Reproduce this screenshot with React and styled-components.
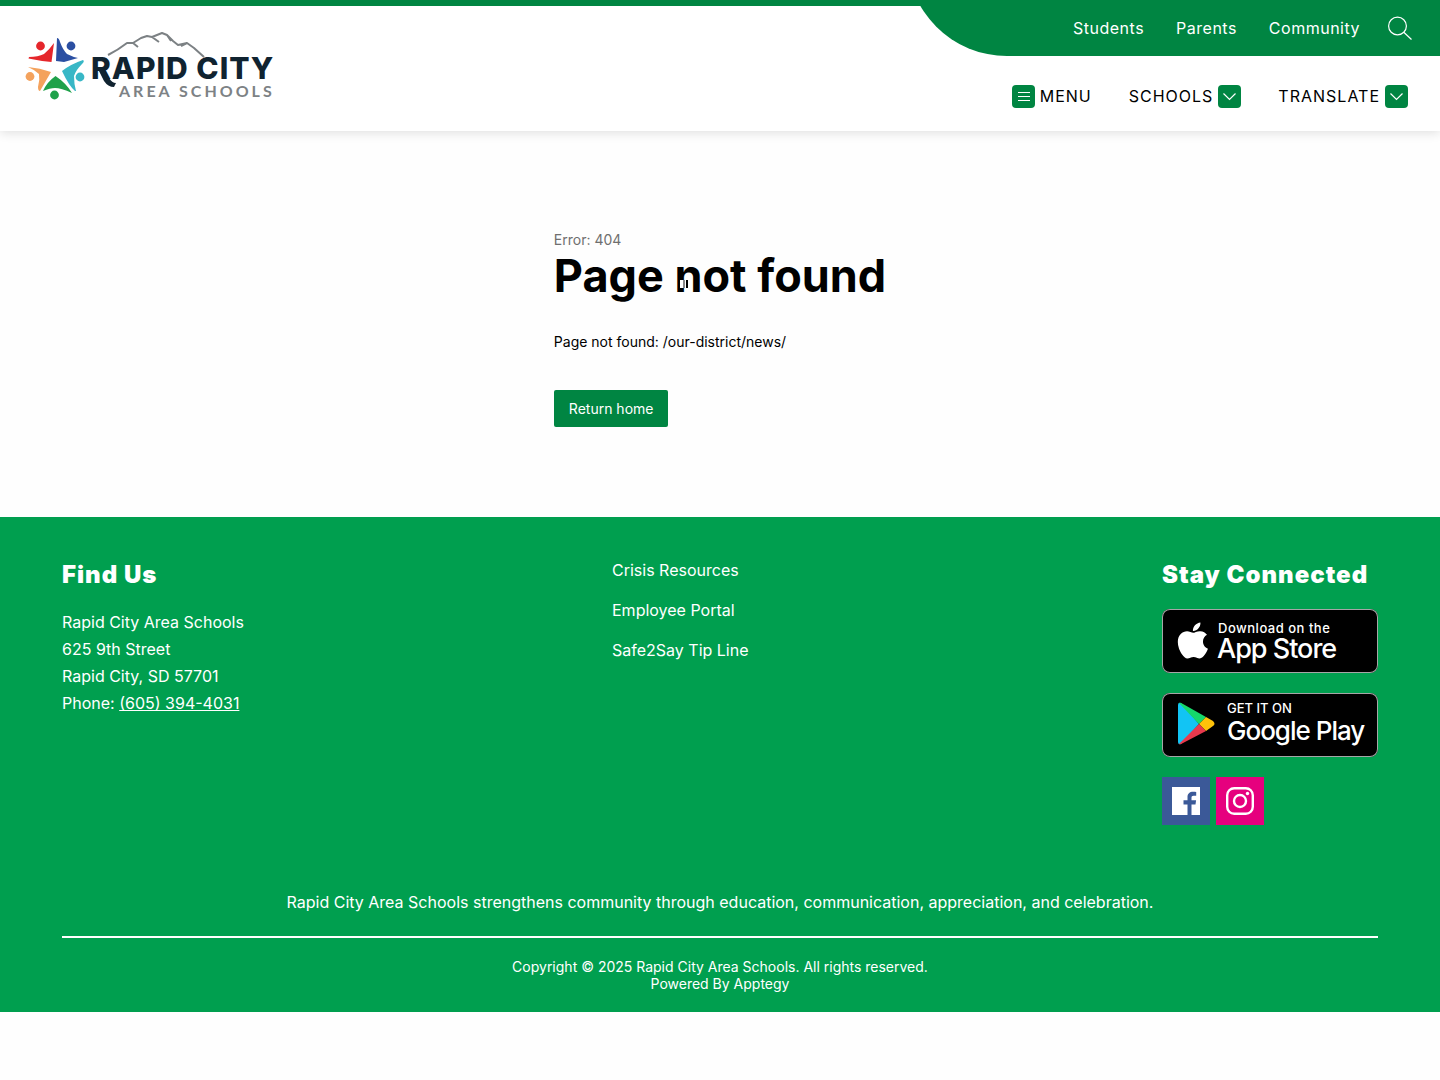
import React from "react";
import styled, { createGlobalStyle } from "styled-components";

const utilityLinks = ["Students", "Parents", "Community"];
const footerLinks = ["Crisis Resources", "Employee Portal", "Safe2Say Tip Line"];

const App = () => {
  return (
    <>
      <GlobalStyle />
      <Header />
      <NotFound />
      <Footer />
    </>
  );
};

const Header = () => {
  return (
    <HeaderWrapper>
      <LogoLink href="#home" aria-label="Rapid City Area Schools">
        <Logo />
      </LogoLink>
      <HeaderRight>
        <UtilityBar>
          {utilityLinks.map((link) => (
            <a href="#utility" key={link}>
              {link}
            </a>
          ))}
          <button type="button" aria-label="Search">
            <svg width="24" height="24" viewBox="0 0 24 24" fill="none">
              <circle cx="9.5" cy="10" r="8.9" stroke="currentColor" strokeWidth="1.2" />
              <path d="M15.8 16.300 23.500 23.500" stroke="currentColor" strokeWidth="1.2" />
            </svg>
          </button>
        </UtilityBar>
        <MainNav>
          <NavButton type="button">
            <NavIcon>
              <svg width="23" height="23" viewBox="0 0 23 23">
                <path d="M6 7.5h12M6 11.5h12M6 15.5h12" stroke="#fff" />
              </svg>
            </NavIcon>
            MENU
          </NavButton>
          <NavButton type="button">
            SCHOOLS
            <Chevron />
          </NavButton>
          <NavButton type="button">
            TRANSLATE
            <Chevron />
          </NavButton>
        </MainNav>
      </HeaderRight>
    </HeaderWrapper>
  );
};

const Chevron = () => (
  <NavIcon>
    <svg width="23" height="23" viewBox="0 0 23 23" fill="none">
      <path d="M5.500 8.500l6 6 6-6" stroke="#fff" strokeWidth="1.2" />
    </svg>
  </NavIcon>
);

const Logo = () => (
  <svg width="250" height="76" viewBox="0 0 250 76">
    <g>
      <circle cx="16.5" cy="16" r="4.4" fill="#e5262b" />
      <path d="M30 13 27.5 32Q16 31 4.5 28.5L5 27Q14 27 20 24Q25 20 30 13Z" fill="#e5262b" />
      <circle cx="47" cy="16" r="4.4" fill="#2b4fa2" />
      <path d="M33 8Q35 8 36 12Q39 20 43 24Q49 27 54 28L40 32 32 31Z" fill="#2b4fa2" />
      <circle cx="56" cy="47" r="4.4" fill="#38b7c6" />
      <path d="M59 30Q61 31 58 34Q52 40 50 46Q50 54 52 61L51 61Q45 56 38 41 47 34 59 30Z" fill="#38b7c6" />
      <circle cx="6" cy="46.5" r="4.4" fill="#f4a25d" />
      <path d="M4 37Q16 38 27 42L16 61Q14 61 14 57Q16 50 15 44Q11 40 4 37Z" fill="#f4a25d" />
      <circle cx="30.5" cy="65" r="4.4" fill="#1fa14a" />
      <path d="M31.5 46Q42 53 48 63Q37 58 31 58Q26 58 19 61Q23 52 31.5 46Z" fill="#1fa14a" />
    </g>
    <path
      d="M84 25Q94 20 103 13L109 13 117 8 123 6 128 7 138 3 143 5 149 11 154 15 163 13 170 18 180 27M109 13l5 4M128 7l7 5M143 5l4 6M163 13l-6 3"
      fill="none"
      stroke="#7c8184"
      strokeWidth="2"
      strokeLinejoin="round"
    />
    <LogoName x="67" y="49">
      RAPID CITY
    </LogoName>
    <path d="M74 39 80 39 85 48Q88 53 92 53L90 57Q84 57 80 51Z" fill="#102330" />
    <LogoSub x="95" y="67">
      AREA SCHOOLS
    </LogoSub>
  </svg>
);

const NotFound = () => {
  return (
    <Main>
      <div>
        <ErrorCode>Error: 404</ErrorCode>
        <Title>Page not found</Title>
        <Message>Page not found: /our-district/news/</Message>
        <HomeLink href="#home">Return home</HomeLink>
      </div>
    </Main>
  );
};

const Footer = () => {
  return (
    <FooterWrapper>
      <Columns>
        <section>
          <FooterTitle>Find Us</FooterTitle>
          <Address>
            Rapid City Area Schools
            <br />
            625 9th Street
            <br />
            Rapid City, SD 57701
            <br />
            Phone: <a href="tel:6053944031">(605) 394-4031</a>
          </Address>
        </section>
        <LinkList>
          {footerLinks.map((link) => (
            <li key={link}>
              <a href="#footer">{link}</a>
            </li>
          ))}
        </LinkList>
        <section>
          <FooterTitle>Stay Connected</FooterTitle>
          <StoreLinks>
            <StoreLink href="#app-store" aria-label="Download on the App Store">
              <AppleBadge />
            </StoreLink>
            <StoreLink href="#google-play" aria-label="Get it on Google Play">
              <PlayBadge />
            </StoreLink>
          </StoreLinks>
          <SocialLinks>
            <SocialLink href="#facebook" aria-label="Facebook" $color="#3b5998">
              <svg width="28" height="28" viewBox="0 0 28 28">
                <path
                  d="M0 0h28v28h-8.5V17.5h4l.6-4.2h-4.6v-2.500c0-1.300.5-2 2.100-2h2.600V5c-.8-.1-1.900-.2-3-.2-3.600 0-5.700 2-5.700 5.400v3.100h-4v4.200h4V28H0z"
                  fill="#fff"
                />
              </svg>
            </SocialLink>
            <SocialLink href="#instagram" aria-label="Instagram" $color="#e6007e">
              <svg width="28" height="28" viewBox="0 0 28 28" fill="none">
                <rect x="1.2" y="1.2" width="25.6" height="25.6" rx="7" stroke="#fff" strokeWidth="2.4" />
                <circle cx="14" cy="14" r="6" stroke="#fff" strokeWidth="2.4" />
                <circle cx="21.5" cy="6.5" r="1.7" fill="#fff" />
              </svg>
            </SocialLink>
          </SocialLinks>
        </section>
      </Columns>
      <Mission>
        Rapid City Area Schools strengthens community through education,
        communication, appreciation, and celebration.
      </Mission>
      <Copyright>
        Copyright © 2025 Rapid City Area Schools. All rights reserved.
        <br />
        Powered By <a href="#apptegy">Apptegy</a>
      </Copyright>
    </FooterWrapper>
  );
};

const AppleBadge = () => (
  <svg width="216" height="64" viewBox="0 0 216 64">
    <g transform="translate(15.500 11) scale(0.08)" fill="#fff">
      <path d="M318.700 268.700c-.2-36.700 16.400-64.400 50-84.800-18.800-26.900-47.200-41.700-84.700-44.600-35.500-2.800-74.300 20.700-88.500 20.700-15 0-49.400-19.700-76.400-19.700C63.300 141.200 4 184.800 4 273.500q0 39.300 14.400 81.200c12.800 36.700 59 126.700 107.200 125.200 25.200-.6 43-17.900 75.800-17.900 31.800 0 48.300 17.900 76.400 17.900 48.600-.7 90.400-82.500 102.600-119.300-65.200-30.700-61.700-90-61.700-91.900zm-56.600-164.200c27.300-32.400 24.800-61.900 24-72.500-24.100 1.400-52 16.400-67.900 34.900-17.500 19.800-27.800 44.300-25.600 71.900 26.100 2 49.900-11.400 69.500-34.300z" />
    </g>
    <BadgeText x="56" y="24" $size={13} $weight={500} $spacing="0.5px">
      Download on the
    </BadgeText>
    <BadgeText x="55" y="49" $size={27} $weight={500} $spacing="-1px">
      App Store
    </BadgeText>
  </svg>
);

const PlayBadge = () => (
  <svg width="216" height="64" viewBox="0 0 216 64">
    <path d="M16 12Q16 9 19 10L37 31 19 51Q16 52 16 49Z" fill="#12c4f4" />
    <path d="M17 10Q18 9 21 11L44 24 37 31Z" fill="#15d96b" />
    <path d="M44 24 51 28Q54 31 51 33L44 38 37 31Z" fill="#ffc20a" />
    <path d="M17 51Q18 52 21 50L44 38 37 31Z" fill="#e8394d" />
    <BadgeText x="65" y="20" $size={13} $weight={500} $spacing="0">
      GET IT ON
    </BadgeText>
    <BadgeText x="65" y="47" $size={26} $weight={500} $spacing="-1px">
      Google Play
    </BadgeText>
  </svg>
);

const GlobalStyle = createGlobalStyle`
  * {
    box-sizing: border-box;
    margin: 0;
    padding: 0;
  }
  body {
    background-color: #fefefe;
    color: #000;
    font-family: Inter, "Liberation Sans", sans-serif;
    font-size: 16px;
  }
  a {
    color: inherit;
    text-decoration: none;
  }
  button {
    border: none;
    background-color: transparent;
    color: inherit;
    font: inherit;
    cursor: pointer;
  }
  svg {
    display: block;
  }
`;

const HeaderWrapper = styled.header`
  display: flex;
  justify-content: space-between;
  overflow: hidden;
  background-color: #fff;
  border-top: 6px solid #008542;
  box-shadow: 0 2px 10px rgba(0, 0, 0, 0.12);
`;

const LogoLink = styled.a`
  padding: 24px;
`;

const LogoName = styled.text`
  font-family: Inter, sans-serif;
  font-size: 30px;
  font-weight: 800;
  letter-spacing: 1px;
  fill: #102330;
`;

const LogoSub = styled.text`
  font-family: Lato, sans-serif;
  font-size: 16px;
  font-weight: 700;
  letter-spacing: 3px;
  fill: #7d8285;
`;

const HeaderRight = styled.div`
  display: flex;
  flex-direction: column;
  align-items: flex-end;
`;

/* starts above the page edge so that only the low part of the curve shows */
const UtilityBar = styled.nav`
  display: flex;
  align-items: center;
  gap: 32px;
  height: 106px;
  margin-top: -56px;
  padding: 50px 28px 0 166px;
  border-bottom-left-radius: 100px;
  background-color: #008542;
  color: #fff;
  letter-spacing: 0.5px;
  button {
    margin-left: -4px;
  }
`;

const MainNav = styled.nav`
  display: flex;
  gap: 37px;
  padding: 29px 32px 23px;
`;

const NavButton = styled.button`
  display: flex;
  align-items: center;
  gap: 5px;
  letter-spacing: 1px;
  line-height: 23px;
`;

const NavIcon = styled.span`
  width: 23px;
  height: 23px;
  border-radius: 4px;
  background-color: #008542;
`;

const Main = styled.main`
  display: flex;
  justify-content: center;
  padding: 100px 24px 90px;
`;

const ErrorCode = styled.p`
  color: #6f6f6f;
  font-size: 14px;
  line-height: 17px;
`;

const Title = styled.h1`
  position: relative;
  margin-bottom: 29px;
  font-size: 45px;
  line-height: 56px;
  /* small pause mark on top of the heading */
  &::after {
    content: "";
    position: absolute;
    top: 32px;
    left: 126px;
    width: 8px;
    height: 8px;
    background: linear-gradient(
      to right,
      #fff 3px,
      #888 3px 5px,
      #fff 5px 6px,
      #000 6px
    );
  }
`;

const Message = styled.p`
  margin-bottom: 40px;
  font-size: 14px;
  line-height: 17px;
`;

const HomeLink = styled.a`
  display: inline-block;
  padding: 10px 15px;
  border-radius: 2px;
  background-color: #008542;
  color: #fff;
  font-size: 14px;
  line-height: 17px;
`;

const FooterWrapper = styled.footer`
  padding: 40px 62px 20px;
  background-color: #009f4f;
  color: #fff;
`;

const Columns = styled.div`
  display: grid;
  grid-template-columns: 1fr 1fr 216px;
`;

const FooterTitle = styled.h2`
  margin-bottom: 17px;
  font-size: 24px;
  font-weight: 900;
  letter-spacing: 1px;
  line-height: 35px;
  white-space: nowrap;
`;

const Address = styled.address`
  font-style: normal;
  line-height: 27px;
  a {
    text-decoration: underline;
  }
`;

const LinkList = styled.ul`
  display: flex;
  flex-direction: column;
  gap: 20px;
  padding-top: 3px;
  list-style: none;
  line-height: 20px;
`;

const StoreLinks = styled.div`
  display: flex;
  flex-direction: column;
  gap: 20px;
  margin-bottom: 20px;
`;

const StoreLink = styled.a`
  border-radius: 8px;
  background-color: #000;
  box-shadow: inset 0 0 0 1px #a6a6a6;
`;

const BadgeText = styled.text`
  font-family: Inter, sans-serif;
  font-size: ${(props) => props.$size}px;
  font-weight: ${(props) => props.$weight || 400};
  letter-spacing: ${(props) => props.$spacing};
  fill: #fff;
`;

const SocialLinks = styled.div`
  display: flex;
  gap: 6px;
`;

const SocialLink = styled.a`
  display: flex;
  justify-content: center;
  align-items: center;
  width: 48px;
  height: 48px;
  background-color: ${(props) => props.$color};
`;

const Mission = styled.p`
  margin-top: 67px;
  padding-bottom: 24px;
  border-bottom: 2px solid #fff;
  line-height: 20px;
  text-align: center;
`;

const Copyright = styled.p`
  padding-top: 20px;
  font-size: 14px;
  line-height: 17px;
  text-align: center;
`;

export default App;
